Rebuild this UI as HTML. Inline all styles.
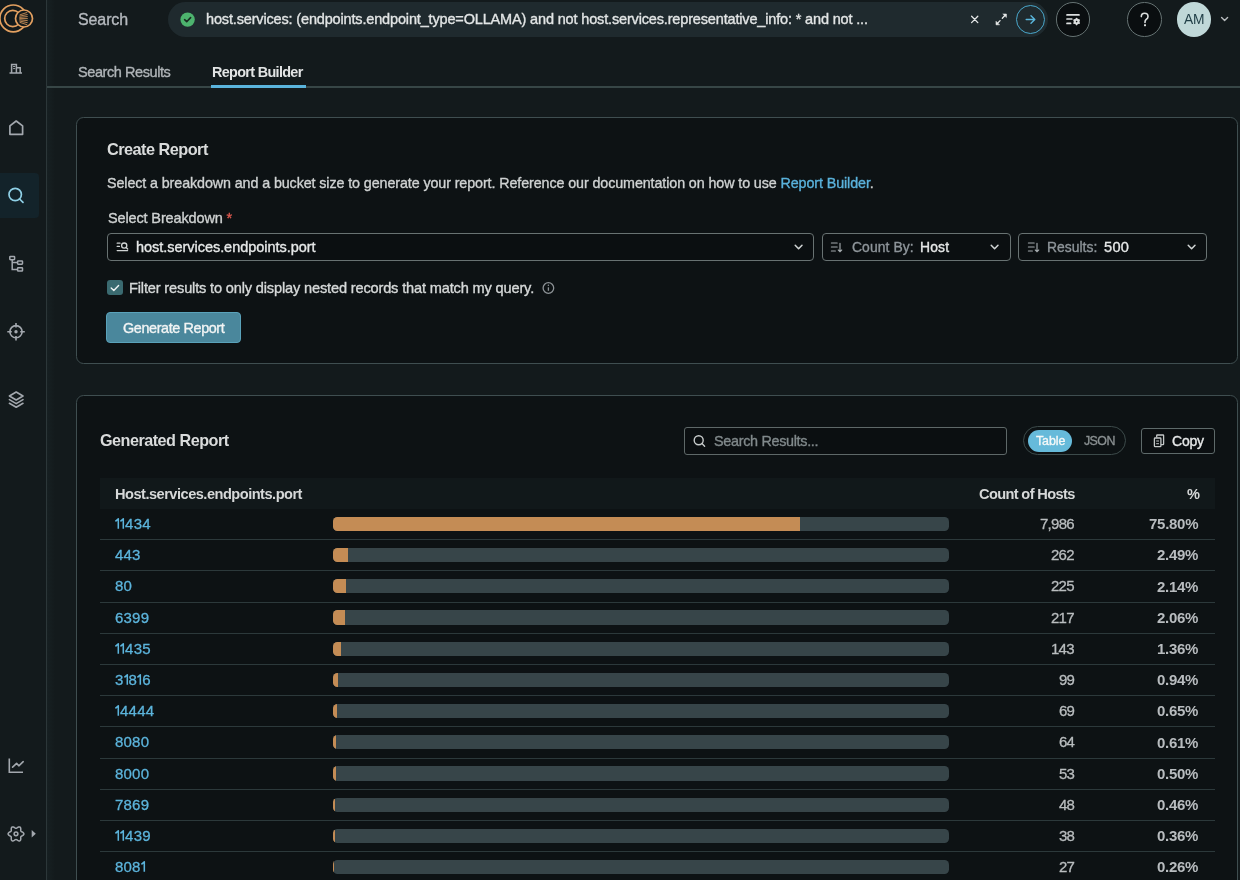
<!DOCTYPE html>
<html><head><meta charset="utf-8">
<style>
*{box-sizing:border-box;margin:0;padding:0}
html,body{width:1240px;height:880px;overflow:hidden;background:#131a1c;font-family:"Liberation Sans",sans-serif;color:#e0e2e2}
.abs{position:absolute}
svg{position:absolute;overflow:visible}
.t{position:absolute;white-space:nowrap;line-height:1;will-change:transform}
.bl{display:inline-block;width:0;height:0;vertical-align:baseline}
.row span{white-space:nowrap;will-change:transform}
.row .p,.row .c{-webkit-text-stroke:0.3px}
#side{position:absolute;left:0;top:0;width:47px;height:880px;background:#131a1c;border-right:1.6px solid #2c3739}
#shade{position:absolute;left:47px;top:0;width:8px;height:880px;background:linear-gradient(90deg,#172022,#131a1c)}
.card{position:absolute;background:#0d1214;border:1.7px solid #3f4e50;border-radius:7.5px}
.sel{position:absolute;border:1.3px solid #687272;border-radius:4px;background:#0b0f11}
.row{position:absolute;left:100px;width:1115px;height:31.2px;border-bottom:1px solid #2c393b}
.row .p{position:absolute;left:14.98px;top:7.01px;font-size:15px;color:#5cb4dc;line-height:1;letter-spacing:0.214px}
.row .p b{display:inline-block;position:relative;width:4.85px;height:0;margin-right:0.214px}
.row .p b svg{left:0;bottom:0}
.row .bar{position:absolute;left:232.6px;top:7.8px;width:616.4px;height:14.2px;border-radius:4.5px;background:#374549;overflow:hidden}
.row .bar i{position:absolute;left:0;top:0;bottom:0;background:#c48c55}
.row .c{position:absolute;right:140.79px;top:7.01px;font-size:15px;color:#b9bdbf;line-height:1;letter-spacing:-0.720px}
.row .pc{position:absolute;right:16.49px;top:7.22px;font-size:15px;font-weight:bold;color:#b8bcbf;line-height:1;letter-spacing:-0.278px}
</style></head>
<body>
<div id="side"></div><div id="shade"></div>
<div class="abs" style="left:0;top:173px;width:39px;height:45px;background:#13232a;border-radius:0 4px 4px 0"></div>
<!-- logo -->
<svg style="left:0;top:0" width="46" height="40" viewBox="0 0 46 40">
 <defs><mask id="lm"><rect x="-5" y="-5" width="60" height="50" fill="#fff"/><circle cx="24" cy="18.5" r="8.6" fill="#000"/></mask></defs>
 <g fill="none" stroke="#e3a060" stroke-width="1.7">
 <circle cx="13.3" cy="18.4" r="13.4" mask="url(#lm)"/>
 <circle cx="12.8" cy="18.5" r="8.1" mask="url(#lm)"/>
 <circle cx="24" cy="18.5" r="8.5"/>
 </g>
 <g stroke="#e3a060" stroke-width="0.8" fill="none" stroke-linecap="round">
  <path d="M20 14.8 L26.9 12.5 M19.8 16.1 L27.2 14.6 M19.7 17.4 L27.3 16.6 M19.7 18.6 L27.4 18.6 M19.7 19.8 L27.3 20.6 M19.8 21.1 L27.2 22.6 M20 22.4 L26.9 24.7"/>
 </g>
</svg>
<!-- sidebar icons -->
<svg style="left:0;top:50px" width="32" height="32" viewBox="0 0 32 32" fill="none" stroke="#a3a8ae" stroke-width="1.5">
 <path d="M11.6 23 V14.6 H16.4 V23 M16.4 17.8 H20.2 V23 M9.5 23.1 H22"/>
 <path d="M13.1 16.5 H15.2 M13.1 18.6 H15.2" stroke-width="1"/>
</svg>
<svg style="left:0;top:112px" width="32" height="32" viewBox="0 0 32 32" fill="none" stroke="#a3a8ae" stroke-width="1.7" stroke-linejoin="round">
 <path d="M9.9 13.9 L16.2 9 L22.6 13.9 V22.3 H9.9 Z"/>
</svg>
<svg style="left:0;top:180px" width="32" height="32" viewBox="0 0 32 32" fill="none" stroke="#8fd0e6" stroke-width="1.7" stroke-linecap="round">
 <circle cx="15.2" cy="14.5" r="6.2"/><path d="M19.6 19 L23 22.4"/>
</svg>
<svg style="left:0;top:248px" width="32" height="32" viewBox="0 0 32 32" fill="none" stroke="#a3a8ae" stroke-width="1.5">
 <rect x="9.8" y="8.4" width="4.8" height="3.3" rx="0.6"/>
 <rect x="17.6" y="12.9" width="4.9" height="3.3" rx="0.6"/>
 <rect x="17.6" y="19.7" width="4.9" height="3.3" rx="0.6"/>
 <path d="M12.2 11.7 V21.4 H17.6 M12.2 14.6 H17.6"/>
</svg>
<svg style="left:0;top:316px" width="32" height="32" viewBox="0 0 32 32" fill="none" stroke="#a3a8ae" stroke-width="1.6">
 <circle cx="16" cy="15.7" r="6.1"/>
 <path d="M16 7 V11.5 M16 20 V24.6 M7.3 15.7 H11.8 M20.2 15.7 H24.8"/>
 <circle cx="16" cy="15.7" r="0.9" fill="#a3a8ae"/>
</svg>
<svg style="left:0;top:384px" width="32" height="32" viewBox="0 0 32 32" fill="none" stroke="#a3a8ae" stroke-width="1.6" stroke-linejoin="round" stroke-linecap="round">
 <path d="M16.2 8 L23 12 L16.2 16 L9.4 12 Z"/>
 <path d="M9.4 15.6 L16.2 19.6 L23 15.6 M9.4 19.3 L16.2 23.3 L23 19.3"/>
</svg>
<svg style="left:0;top:750px" width="40" height="30" viewBox="0 0 40 30" fill="none" stroke="#a3a8ae" stroke-width="1.6">
 <path d="M9.3 8.5 V22.2 H23"/>
 <path d="M12.6 17.2 L16.6 13.4 L18.8 15.8 L23.2 11.7" stroke-linejoin="round" stroke-linecap="round"/>
</svg>
<svg style="left:0;top:820px" width="40" height="30" viewBox="0 0 40 30" fill="none" stroke="#a3a8ae" stroke-width="1.5">
 <path d="M23.90 13.90 L23.72 13.22 L23.21 12.63 L22.52 12.15 L21.80 11.79 L21.21 11.47 L20.85 11.10 L20.71 10.60 L20.73 9.93 L20.77 9.13 L20.71 8.29 L20.44 7.55 L19.95 7.06 L19.27 6.88 L18.51 7.02 L17.75 7.38 L17.07 7.82 L16.50 8.17 L16.00 8.30 L15.50 8.17 L14.93 7.82 L14.25 7.38 L13.49 7.02 L12.73 6.88 L12.05 7.06 L11.56 7.55 L11.29 8.29 L11.23 9.13 L11.27 9.93 L11.29 10.60 L11.15 11.10 L10.79 11.47 L10.20 11.79 L9.48 12.15 L8.79 12.63 L8.28 13.22 L8.10 13.90 L8.28 14.58 L8.79 15.17 L9.48 15.65 L10.20 16.01 L10.79 16.33 L11.15 16.70 L11.29 17.20 L11.27 17.87 L11.23 18.67 L11.29 19.51 L11.56 20.25 L12.05 20.74 L12.73 20.92 L13.49 20.78 L14.25 20.42 L14.93 19.98 L15.50 19.63 L16.00 19.50 L16.50 19.63 L17.07 19.98 L17.75 20.42 L18.51 20.78 L19.27 20.92 L19.95 20.74 L20.44 20.25 L20.71 19.51 L20.77 18.67 L20.73 17.87 L20.71 17.20 L20.85 16.70 L21.21 16.33 L21.80 16.01 L22.52 15.65 L23.21 15.17 L23.72 14.58 L23.90 13.90Z" stroke-linejoin="round"/>
 <circle cx="16" cy="13.8" r="1.9"/>
 <path d="M31.7 10 L35.8 13.7 L31.7 17.4 Z" fill="#a3a8ae" stroke="none"/>
</svg>

<!-- top bar -->
<div class="abs" style="left:168px;top:1.5px;width:880px;height:35.5px;border-radius:18px;background:#1f2a2e"></div>
<svg style="left:180px;top:12px" width="15" height="15" viewBox="0 0 15 15">
 <circle cx="7.6" cy="7.6" r="7.2" fill="#4db36e"/>
 <path d="M4.6 7.7 L6.7 9.7 L10.6 5.6" fill="none" stroke="#1a2a22" stroke-width="1.6" stroke-linecap="round" stroke-linejoin="round"/>
</svg>
<svg style="left:960px;top:0" width="60" height="40" viewBox="0 0 60 40" fill="none" stroke="#e6e8e8" stroke-width="1.3" stroke-linecap="round">
 <path d="M11.6 16.3 L17.8 22.6 M17.8 16.3 L11.6 22.6"/>
 <path d="M45.4 15 L42.3 18.3 M36.9 23.9 L40.1 20.6" stroke-width="1.3"/><path d="M43.2 14 H46.4 V17.2 Z M36 21.6 V24.8 H39.2 Z" fill="#e6e8e8" stroke-width="0.6" stroke-linejoin="round"/>
</svg>
<div class="abs" style="left:1015.8px;top:5px;width:29px;height:29px;border-radius:50%;border:1.5px solid #4aa8cc"></div>
<svg style="left:1016px;top:5px" width="29" height="29" viewBox="0 0 29 29" fill="none" stroke="#5ab6dc" stroke-width="1.4" stroke-linecap="round" stroke-linejoin="round">
 <path d="M10.2 14.5 H18.6 M15 10.7 L18.8 14.5 L15 18.3"/>
</svg>
<div class="abs" style="left:1055.7px;top:2.2px;width:34.5px;height:34.5px;border-radius:50%;border:1.8px solid #667373;background:#0a0e10"></div>
<svg style="left:1056px;top:0" width="34" height="40" viewBox="0 0 34 40" fill="none" stroke="#dcdfdf" stroke-width="1.7" stroke-linecap="round">
 <path d="M11 14.9 H23 M11 19 H15.8 M11 23.4 H14.6"/>
 <circle cx="20.6" cy="21.6" r="1.9" stroke-width="2.2"/>
 <path d="M20.6 18.6 V19.2 M20.6 24 V24.6 M18 20.1 L18.5 20.4 M22.7 22.8 L23.2 23.1 M18 23.1 L18.5 22.8 M22.7 20.4 L23.2 20.1" stroke-width="1.6"/>
</svg>
<div class="abs" style="left:1127.3px;top:2.3px;width:34.6px;height:34.6px;border-radius:50%;border:1.8px solid #667373;background:#0a0e10"></div>
<svg style="left:1127px;top:0" width="36" height="40" viewBox="0 0 36 40" fill="none" stroke="#dcdfdf" stroke-width="1.6" stroke-linecap="round">
 <path d="M14.3 16.6 Q14.3 13.3 17.6 13.3 Q21 13.3 21 16.4 Q21 18.2 19.4 19.2 Q18 20.1 18 21.9 V22.5"/>
 <rect x="17" y="24.2" width="2" height="2" rx="0.4" fill="#dcdfdf" stroke="none"/>
</svg>
<div class="abs" style="left:1176.6px;top:2.3px;width:34.6px;height:34.6px;border-radius:50%;background:#c0d8d8"></div>
<svg style="left:1215px;top:10px" width="20" height="20" viewBox="0 0 20 20" fill="none" stroke="#b8bcbe" stroke-width="1.4" stroke-linecap="round" stroke-linejoin="round">
 <path d="M6.6 7.6 L9.6 10.5 L12.6 7.6"/>
</svg>

<!-- tabs -->
<div class="abs" style="left:47px;top:86px;width:1193px;height:1.5px;background:#374646"></div>
<div class="abs" style="left:211px;top:85px;width:95px;height:2.6px;background:#5ab4dc"></div>

<!-- card 1 -->
<div class="card" style="left:76px;top:117px;width:1162px;height:247px"></div>
<div class="sel" style="left:107px;top:233px;width:707px;height:28.3px"></div>
<svg style="left:107px;top:233px" width="30" height="28" viewBox="0 0 30 28" fill="none" stroke="#d0d4d4" stroke-width="1.3" stroke-linecap="round">
 <path d="M10.2 10.2 H13 M10.2 13.4 H12.4 M10.2 17.6 H20.6"/>
 <circle cx="17.2" cy="12.6" r="2.6"/><path d="M19.1 14.5 L20.7 16"/>
</svg>
<svg style="left:780px;top:235px" width="40" height="25" viewBox="0 0 40 25" fill="none" stroke="#d0d4d4" stroke-width="1.5" stroke-linecap="round" stroke-linejoin="round">
 <path d="M15.2 10.2 L18.6 13.8 L22 10.2"/>
</svg>
<div class="sel" style="left:821.5px;top:233px;width:189px;height:28.3px"></div>
<svg style="left:820px;top:235px" width="30" height="25" viewBox="0 0 30 25" fill="none" stroke="#a4aaad" stroke-width="1.15" stroke-linecap="round">
 <path d="M11.4 8 H17.2 M11.4 12 H17.2 M11.4 16 H15.4 M20 8.2 V16.6 M18.3 15 L20 16.7 L21.7 15"/>
</svg>
<svg style="left:976px;top:235px" width="40" height="25" viewBox="0 0 40 25" fill="none" stroke="#d0d4d4" stroke-width="1.5" stroke-linecap="round" stroke-linejoin="round">
 <path d="M15.2 10.2 L18.6 13.8 L22 10.2"/>
</svg>
<div class="sel" style="left:1018px;top:233px;width:189px;height:28.3px"></div>
<svg style="left:1017px;top:235px" width="30" height="25" viewBox="0 0 30 25" fill="none" stroke="#a4aaad" stroke-width="1.15" stroke-linecap="round">
 <path d="M11.4 8 H17.2 M11.4 12 H17.2 M11.4 16 H15.4 M20 8.2 V16.6 M18.3 15 L20 16.7 L21.7 15"/>
</svg>
<svg style="left:1173px;top:235px" width="40" height="25" viewBox="0 0 40 25" fill="none" stroke="#d0d4d4" stroke-width="1.5" stroke-linecap="round" stroke-linejoin="round">
 <path d="M15.2 10.2 L18.6 13.8 L22 10.2"/>
</svg>
<div class="abs" style="left:107px;top:280px;width:15.6px;height:15.3px;border-radius:3px;background:#3a6a70"></div>
<svg style="left:107px;top:280px" width="16" height="16" viewBox="0 0 16 16" fill="none" stroke="#f0f4f4" stroke-width="1.4" stroke-linecap="round" stroke-linejoin="round">
 <path d="M4.2 8 L6.8 10.4 L11.6 5.4"/>
</svg>
<svg style="left:540px;top:280px" width="16" height="16" viewBox="0 0 16 16" fill="none" stroke="#8c9296" stroke-width="1.3">
 <circle cx="8.4" cy="8" r="5.3"/><path d="M8.4 7.3 V10.8" stroke-width="1.3"/><circle cx="8.4" cy="5.3" r="0.75" fill="#8c9296" stroke="none"/>
</svg>
<div class="abs" style="left:105.7px;top:312.4px;width:135.6px;height:30.2px;border-radius:4px;background:#4a879c;border:1.5px solid #5aa2ba"></div>

<!-- card 2 -->
<div class="card" style="left:76px;top:394.6px;width:1162px;height:520px"></div>
<div class="sel" style="left:684.3px;top:426.6px;width:323px;height:28.4px;border-radius:3px;border-color:#5e6868"></div>
<svg style="left:684px;top:427px" width="30" height="28" viewBox="0 0 30 28" fill="none" stroke="#c8cccc" stroke-width="1.4" stroke-linecap="round">
 <circle cx="14.7" cy="13.3" r="4.5"/><path d="M18 16.6 L20.6 19.2"/>
</svg>
<div class="abs" style="left:1022.6px;top:426.4px;width:103.8px;height:28.3px;border-radius:15px;border:1.3px solid #3c4a4a"></div>
<div class="abs" style="left:1027.7px;top:429.8px;width:44px;height:22.7px;border-radius:12px;background:#66bada"></div>
<div class="sel" style="left:1141.2px;top:427.6px;width:73.6px;height:26px;border-radius:3px;border:1.5px solid #5e6a6a"></div>
<svg style="left:1145px;top:428px" width="30" height="25" viewBox="0 0 30 25" fill="none" stroke="#c4c8c8" stroke-width="1.3">
 <path d="M11.7 9.5 V7.6 Q11.7 7 12.3 7 H18 Q18.6 7 18.6 7.6 V16 Q18.6 16.6 18 16.6 H15.9"/>
 <rect x="9.4" y="10" width="6.5" height="8.7" rx="0.8"/>
 <path d="M11.2 13 H14 M11.2 15.7 H14" stroke-width="1"/>
</svg>

<div class="abs" style="left:100px;top:478.3px;width:1115px;height:30.7px;background:#11181a"></div>

<div class="row" style="top:509.00px"><span class="p" id="r0p"><b><svg width="5.5" height="10.8" viewBox="0 0 5.5 10.8" fill="none" stroke="#5cb4dc" stroke-width="1.55" stroke-linejoin="round"><path d="M0.4 3.3 L3.3 0.8 V10.8"/></svg></b><b><svg width="5.5" height="10.8" viewBox="0 0 5.5 10.8" fill="none" stroke="#5cb4dc" stroke-width="1.55" stroke-linejoin="round"><path d="M0.4 3.3 L3.3 0.8 V10.8"/></svg></b>434<i class="bl"></i></span><div class="bar"><i style="width:467.23px"></i></div><span class="c" id="r0c">7,986<i class="bl"></i></span><span class="pc" id="r0pc">75.80%<i class="bl"></i></span></div>
<div class="row" style="top:540.20px"><span class="p" id="r1p">443<i class="bl"></i></span><div class="bar"><i style="width:15.35px"></i></div><span class="c" id="r1c">262<i class="bl"></i></span><span class="pc" id="r1pc">2.49%<i class="bl"></i></span></div>
<div class="row" style="top:571.40px"><span class="p">80</span><div class="bar"><i style="width:13.19px"></i></div><span class="c">225</span><span class="pc">2.14%</span></div>
<div class="row" style="top:602.60px"><span class="p">6399</span><div class="bar"><i style="width:12.70px"></i></div><span class="c">217</span><span class="pc">2.06%</span></div>
<div class="row" style="top:633.80px"><span class="p"><b><svg width="5.5" height="10.8" viewBox="0 0 5.5 10.8" fill="none" stroke="#5cb4dc" stroke-width="1.55" stroke-linejoin="round"><path d="M0.4 3.3 L3.3 0.8 V10.8"/></svg></b><b><svg width="5.5" height="10.8" viewBox="0 0 5.5 10.8" fill="none" stroke="#5cb4dc" stroke-width="1.55" stroke-linejoin="round"><path d="M0.4 3.3 L3.3 0.8 V10.8"/></svg></b>435</span><div class="bar"><i style="width:8.38px"></i></div><span class="c">143</span><span class="pc">1.36%</span></div>
<div class="row" style="top:665.00px"><span class="p">3<b><svg width="5.5" height="10.8" viewBox="0 0 5.5 10.8" fill="none" stroke="#5cb4dc" stroke-width="1.55" stroke-linejoin="round"><path d="M0.4 3.3 L3.3 0.8 V10.8"/></svg></b>8<b><svg width="5.5" height="10.8" viewBox="0 0 5.5 10.8" fill="none" stroke="#5cb4dc" stroke-width="1.55" stroke-linejoin="round"><path d="M0.4 3.3 L3.3 0.8 V10.8"/></svg></b>6</span><div class="bar"><i style="width:5.79px"></i></div><span class="c">99</span><span class="pc">0.94%</span></div>
<div class="row" style="top:696.20px"><span class="p"><b><svg width="5.5" height="10.8" viewBox="0 0 5.5 10.8" fill="none" stroke="#5cb4dc" stroke-width="1.55" stroke-linejoin="round"><path d="M0.4 3.3 L3.3 0.8 V10.8"/></svg></b>4444</span><div class="bar"><i style="width:4.01px"></i></div><span class="c">69</span><span class="pc">0.65%</span></div>
<div class="row" style="top:727.40px"><span class="p">8080</span><div class="bar"><i style="width:3.76px"></i></div><span class="c">64</span><span class="pc">0.61%</span></div>
<div class="row" style="top:758.60px"><span class="p">8000</span><div class="bar"><i style="width:3.08px"></i></div><span class="c">53</span><span class="pc">0.50%</span></div>
<div class="row" style="top:789.80px"><span class="p">7869</span><div class="bar"><i style="width:2.84px"></i></div><span class="c">48</span><span class="pc">0.46%</span></div>
<div class="row" style="top:821.00px"><span class="p"><b><svg width="5.5" height="10.8" viewBox="0 0 5.5 10.8" fill="none" stroke="#5cb4dc" stroke-width="1.55" stroke-linejoin="round"><path d="M0.4 3.3 L3.3 0.8 V10.8"/></svg></b><b><svg width="5.5" height="10.8" viewBox="0 0 5.5 10.8" fill="none" stroke="#5cb4dc" stroke-width="1.55" stroke-linejoin="round"><path d="M0.4 3.3 L3.3 0.8 V10.8"/></svg></b>439</span><div class="bar"><i style="width:2.22px"></i></div><span class="c">38</span><span class="pc">0.36%</span></div>
<div class="row" style="top:852.20px"><span class="p">808<b><svg width="5.5" height="10.8" viewBox="0 0 5.5 10.8" fill="none" stroke="#5cb4dc" stroke-width="1.55" stroke-linejoin="round"><path d="M0.4 3.3 L3.3 0.8 V10.8"/></svg></b></span><div class="bar"><i style="width:1.60px"></i></div><span class="c">27</span><span class="pc">0.26%</span></div>
<div class="t" id="search" style="left:77.81px;top:11.75px;font-size:16px;-webkit-text-stroke:0.35px;color:#b6babf;letter-spacing:-0.112px">Search<i class="bl"></i></div>
<div class="t" id="query" style="left:205.79px;top:12.40px;font-size:14.5px;-webkit-text-stroke:0.35px;color:#e2e5e5;letter-spacing:-0.158px">host.services: (endpoints.endpoint_type=OLLAMA) and not host.services.representative_info: * and not ...<i class="bl"></i></div>
<div class="t" id="am" style="left:1184.20px;top:13.01px;font-size:13.8px;color:#1f3d45;letter-spacing:-0.172px">AM<i class="bl"></i></div>
<div class="t" id="tab1" style="left:77.80px;top:64.70px;font-size:14.5px;-webkit-text-stroke:0.35px;color:#b0b5b8;letter-spacing:-0.422px">Search Results<i class="bl"></i></div>
<div class="t" id="tab2" style="left:212.33px;top:64.51px;font-size:14.4px;font-weight:bold;color:#e2e4e4;letter-spacing:-0.667px">Report Builder<i class="bl"></i></div>
<div class="t" id="create" style="left:106.70px;top:140.60px;font-size:16.3px;font-weight:bold;color:#d9dbdb;letter-spacing:-0.530px">Create Report<i class="bl"></i></div>
<div class="t" id="desc" style="left:107.05px;top:175.90px;font-size:14.3px;-webkit-text-stroke:0.35px;color:#cfd2d2;letter-spacing:-0.096px">Select a breakdown and a bucket size to generate your report. Reference our documentation on how to use <span style="color:#5ab2dc">Report Builder</span>.<i class="bl"></i></div>
<div class="t" id="selb" style="left:107.85px;top:210.51px;font-size:14.5px;-webkit-text-stroke:0.35px;color:#cfd2d2;letter-spacing:-0.140px">Select Breakdown <span style="color:#e05a50">*</span><i class="bl"></i></div>
<div class="t" id="hostsel" style="left:136.38px;top:239.82px;font-size:14.5px;-webkit-text-stroke:0.35px;color:#e6e8e8;letter-spacing:-0.037px">host.services.endpoints.port<i class="bl"></i></div>
<div class="t" id="countby" style="left:852.01px;top:241.01px;font-size:13.9px;-webkit-text-stroke:0.35px;color:#8e959a;letter-spacing:0.079px">Count By:<i class="bl"></i></div>
<div class="t" id="hostv" style="left:919.74px;top:241.01px;font-size:13.9px;-webkit-text-stroke:0.35px;color:#e6e8e8;letter-spacing:0.155px">Host<i class="bl"></i></div>
<div class="t" id="results" style="left:1047.29px;top:241.01px;font-size:13.9px;-webkit-text-stroke:0.35px;color:#8e959a;letter-spacing:0.019px">Results:<i class="bl"></i></div>
<div class="t" id="r500" style="left:1103.85px;top:240.00px;font-size:14.6px;-webkit-text-stroke:0.35px;color:#e6e8e8;letter-spacing:0.292px">500<i class="bl"></i></div>
<div class="t" id="filter" style="left:129.49px;top:280.91px;font-size:14.6px;-webkit-text-stroke:0.35px;color:#d6d9d9;letter-spacing:-0.163px">Filter results to only display nested records that match my query.<i class="bl"></i></div>
<div class="t" id="genbtn" style="left:122.83px;top:320.51px;font-size:14.4px;-webkit-text-stroke:0.35px;color:#f2f4f4;letter-spacing:-0.387px">Generate Report<i class="bl"></i></div>
<div class="t" id="genrep" style="left:99.88px;top:432.01px;font-size:16.2px;font-weight:bold;color:#d9dbdb;letter-spacing:-0.510px">Generated Report<i class="bl"></i></div>
<div class="t" id="ph" style="left:713.68px;top:433.81px;font-size:14.4px;-webkit-text-stroke:0.35px;color:#80898b;letter-spacing:-0.314px">Search Results...<i class="bl"></i></div>
<div class="t" id="table" style="left:1035.51px;top:434.90px;font-size:12.4px;-webkit-text-stroke:0.35px;color:#f4f8f8;letter-spacing:-0.083px">Table<i class="bl"></i></div>
<div class="t" id="json" style="left:1083.66px;top:434.90px;font-size:12.4px;-webkit-text-stroke:0.35px;color:#8a9092;letter-spacing:-0.571px">JSON<i class="bl"></i></div>
<div class="t" id="copy" style="left:1171.64px;top:433.71px;font-size:14.0px;-webkit-text-stroke:0.35px;color:#e6e8e8;letter-spacing:-0.196px">Copy<i class="bl"></i></div>
<div class="t" id="h1" style="left:114.50px;top:486.91px;font-size:14.6px;font-weight:bold;color:#d6d8d8;letter-spacing:-0.505px">Host.services.endpoints.port<i class="bl"></i></div>
<div class="t" id="h2" style="left:978.94px;top:486.91px;font-size:14.6px;font-weight:bold;color:#d6d8d8;letter-spacing:-0.638px">Count of Hosts<i class="bl"></i></div>
<div class="t" id="h3" style="left:1187.06px;top:486.91px;font-size:14.6px;font-weight:bold;color:#d6d8d8;letter-spacing:0.000px">%<i class="bl"></i></div>
</body></html>
